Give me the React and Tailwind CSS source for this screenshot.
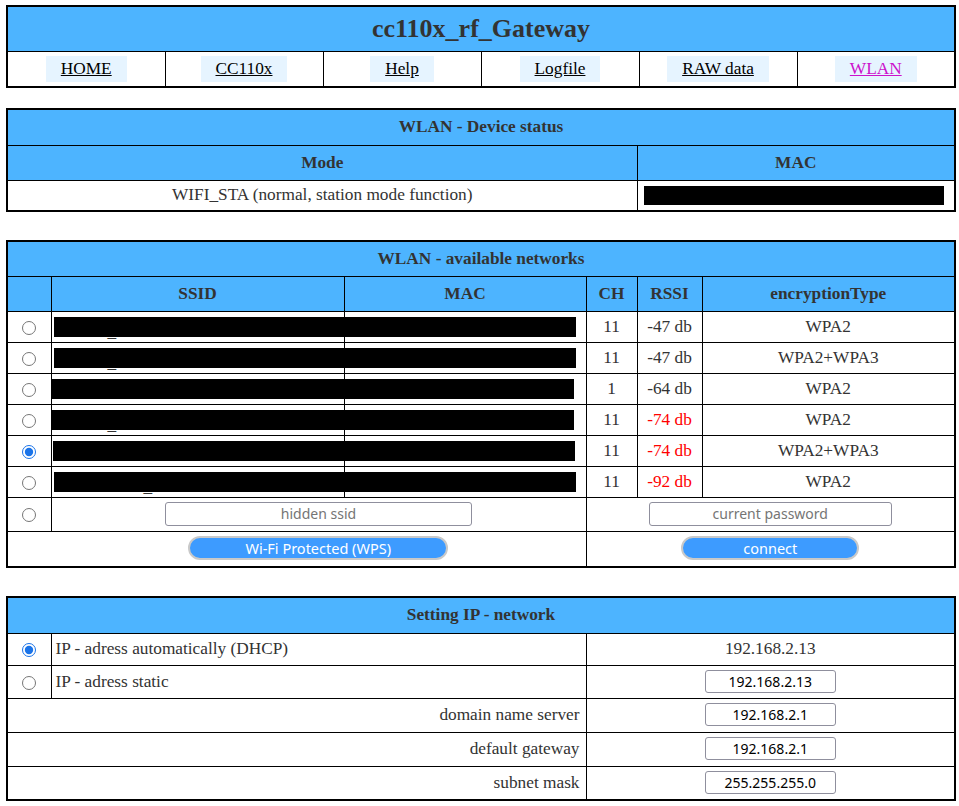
import React from 'react';

const navItems = ['HOME', 'CC110x', 'Help', 'Logfile', 'RAW data', 'WLAN'];

// redacted scan results, the black bars cover SSID + MAC
const networks = [
  { ch: 11, rssi: -47, enc: 'WPA2', box: 'left-[2px]', mark: 'left-[56px]' },
  { ch: 11, rssi: -47, enc: 'WPA2+WPA3', box: 'left-[2px]', mark: 'left-[56px]' },
  { ch: 1, rssi: -64, enc: 'WPA2', box: 'left-[0px]', mark: null },
  { ch: 11, rssi: -74, enc: 'WPA2', box: 'left-[0px]', mark: 'left-[56px]' },
  { ch: 11, rssi: -74, enc: 'WPA2+WPA3', box: 'left-[1px]', mark: null, checked: true },
  { ch: 11, rssi: -92, enc: 'WPA2', box: 'left-[2px]', mark: 'left-[92px]' },
];

const td = 'border border-black p-0 align-middle';
const th = 'border border-black p-0 align-middle bg-[#4db4ff] font-bold text-center';

const Radio = ({ checked, name }) => (
  <input
    type="radio"
    name={name}
    defaultChecked={checked}
    className="w-[14px] h-[14px] align-middle accent-[#1a73e8]"
  />
);

const TextInput = ({ value, placeholder, className }) => (
  <input
    type="text"
    defaultValue={value}
    placeholder={placeholder}
    className={`border border-[#8f8f9d] rounded-[3px] bg-white text-center text-[14px] text-black placeholder:text-[#757575] font-['Noto_Sans',sans-serif] ${className}`}
  />
);

const PillButton = ({ children, className }) => (
  <button className={`h-[24px] rounded-full bg-[#3d9bff] border-2 border-[#c9c9c9] text-white text-[14.5px] leading-none font-['Noto_Sans',sans-serif] ${className}`}>
    {children}
  </button>
);

export default function App() {
  return (
    <div className="min-h-screen bg-white pl-[6px] pt-[5px] pb-4 font-['Liberation_Serif',serif] text-[17.3px] text-[#333]">
      {/* title + navigation */}
      <table className="w-[950px] table-fixed border-collapse border-2 border-black">
        <tbody>
          <tr>
            <td colSpan={6} className={`${th} h-[45px] text-[26px]`}>cc110x_rf_Gateway</td>
          </tr>
          <tr>
            {navItems.map((item) => (
              <td key={item} className={`${td} h-[36px] text-center`}>
                <a
                  href="#"
                  className={`inline-block bg-[#e6f4ff] px-[15px] py-[4px] leading-[18px] underline ${item === 'WLAN' ? 'text-[#cc11cc]' : 'text-black'}`}
                >
                  {item}
                </a>
              </td>
            ))}
          </tr>
        </tbody>
      </table>

      {/* device status */}
      <table className="mt-[20px] w-[950px] table-fixed border-collapse border-2 border-black">
        <colgroup>
          <col className="w-[630px]" />
          <col />
        </colgroup>
        <tbody>
          <tr>
            <td colSpan={2} className={`${th} h-[36px]`}>WLAN - Device status</td>
          </tr>
          <tr>
            <td className={`${th} h-[35px]`}>Mode</td>
            <td className={`${th} h-[35px]`}>MAC</td>
          </tr>
          <tr>
            <td className={`${td} h-[31px] text-center`}>WIFI_STA (normal, station mode function)</td>
            <td className={`${td} h-[31px]`}>
              <div className="ml-[6px] w-[300px] h-[19px] bg-black" />
            </td>
          </tr>
        </tbody>
      </table>

      {/* available networks */}
      <table className="mt-[28px] w-[950px] table-fixed border-collapse border-2 border-black">
        <colgroup>
          <col className="w-[44px]" />
          <col className="w-[293px]" />
          <col className="w-[242px]" />
          <col className="w-[51px]" />
          <col className="w-[65px]" />
          <col />
        </colgroup>
        <tbody>
          <tr>
            <td colSpan={6} className={`${th} h-[35px]`}>WLAN - available networks</td>
          </tr>
          <tr>
            <td className={`${th} h-[35px]`} />
            <td className={th}>SSID</td>
            <td className={th}>MAC</td>
            <td className={th}>CH</td>
            <td className={th}>RSSI</td>
            <td className={th}>encryptionType</td>
          </tr>
          {networks.map((n, i) => (
            <tr key={i}>
              <td className={`${td} h-[31px] text-center`}>
                <Radio name="ssid" checked={n.checked} />
              </td>
              <td className={`${td} relative`}>
                {n.mark && <span className={`absolute top-[10px] leading-[20px] text-[#333] ${n.mark}`}>_</span>}
                <div className={`absolute top-[5px] h-[20px] w-[522px] bg-black z-10 ${n.box}`} />
              </td>
              <td className={td} />
              <td className={`${td} text-center`}>{n.ch}</td>
              <td className={`${td} text-center ${n.rssi < -70 ? 'text-[#ff0000]' : ''}`}>{n.rssi} db</td>
              <td className={`${td} text-center`}>{n.enc}</td>
            </tr>
          ))}
          <tr>
            <td className={`${td} h-[34px] text-center`}>
              <Radio name="ssid" />
            </td>
            <td colSpan={2} className={`${td} text-center`}>
              <TextInput placeholder="hidden ssid" className="w-[307px] h-[24px]" />
            </td>
            <td colSpan={3} className={`${td} text-center`}>
              <TextInput placeholder="current password" className="w-[243px] h-[24px]" />
            </td>
          </tr>
          <tr>
            <td colSpan={3} className={`${td} h-[36px] text-center pl-[43px]`}>
              <PillButton className="w-[260px]">Wi-Fi Protected (WPS)</PillButton>
            </td>
            <td colSpan={3} className={`${td} text-center`}>
              <PillButton className="w-[178px]">connect</PillButton>
            </td>
          </tr>
        </tbody>
      </table>

      {/* ip settings */}
      <table className="mt-[28px] w-[950px] table-fixed border-collapse border-2 border-black">
        <colgroup>
          <col className="w-[44px]" />
          <col className="w-[535px]" />
          <col />
        </colgroup>
        <tbody>
          <tr>
            <td colSpan={3} className={`${th} h-[36px]`}>Setting IP - network</td>
          </tr>
          <tr>
            <td className={`${td} h-[32px] text-center`}>
              <Radio name="ipmode" checked />
            </td>
            <td className={`${td} pl-[4px]`}>IP - adress automatically (DHCP)</td>
            <td className={`${td} text-center`}>192.168.2.13</td>
          </tr>
          <tr>
            <td className={`${td} h-[33px] text-center`}>
              <Radio name="ipmode" />
            </td>
            <td className={`${td} pl-[4px]`}>IP - adress static</td>
            <td className={`${td} text-center`}>
              <TextInput value="192.168.2.13" className="w-[131px] h-[23px]" />
            </td>
          </tr>
          {[
            ['domain name server', '192.168.2.1'],
            ['default gateway', '192.168.2.1'],
            ['subnet mask', '255.255.255.0'],
          ].map(([label, value]) => (
            <tr key={label}>
              <td colSpan={2} className={`${td} h-[34px] text-right pr-[6px]`}>{label}</td>
              <td className={`${td} text-center`}>
                <TextInput value={value} className="w-[131px] h-[23px]" />
              </td>
            </tr>
          ))}
        </tbody>
      </table>
    </div>
  );
}
